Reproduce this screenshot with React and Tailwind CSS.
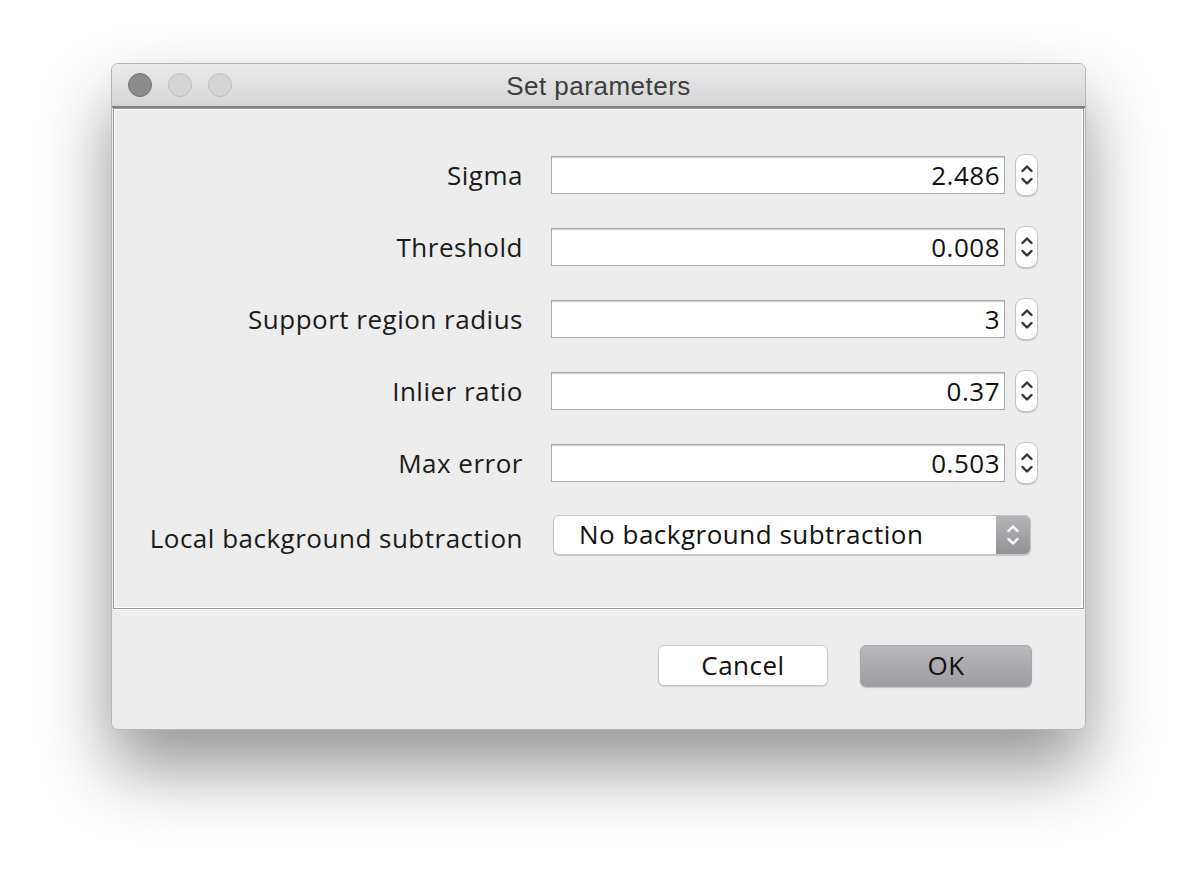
import React from 'react';

const labelFont = { fontFamily: '"Open Sans", "DejaVu Sans", sans-serif', letterSpacing: '0.5px' };

const fields = [
  { label: 'Sigma', value: '2.486' },
  { label: 'Threshold', value: '0.008' },
  { label: 'Support region radius', value: '3' },
  { label: 'Inlier ratio', value: '0.37' },
  { label: 'Max error', value: '0.503' },
];

const Chevrons = ({ color, className }) => (
  <svg viewBox="0 0 14 28" className={className} fill="none" stroke={color} strokeWidth="2.4" strokeLinecap="round" strokeLinejoin="round">
    <path d="M2.5 10 L7 5.5 L11.5 10" />
    <path d="M2.5 18 L7 22.5 L11.5 18" />
  </svg>
);

const Stepper = () => (
  <div className="ml-[10px] flex h-[42px] w-[23px] items-center justify-center rounded-[9px] border border-[#c4c4c4] bg-white shadow-[0_1px_1px_rgba(0,0,0,0.18)]">
    <Chevrons color="#333" className="h-[30px] w-[14px]" />
  </div>
);

const FieldRow = ({ label, value }) => (
  <div className="flex h-[38px] items-center">
    <div className="w-[437px] pr-[28px] text-right text-[26px] text-[#1a1a1a]">{label}</div>
    <div className="flex h-[38px] w-[454px] items-center justify-end border border-[#a9a9a9] bg-white pr-[4px] text-[26px] text-[#111] shadow-[inset_0_1px_0_#d0d0d0]">
      {value}
    </div>
    <Stepper />
  </div>
);

export default function App() {
  return (
    <div className="h-[890px] w-[1198px] bg-white pl-[111px] pt-[63px]" style={labelFont}>
      <div className="flex h-[667px] w-[975px] flex-col overflow-hidden rounded-[7px] border border-[#b5b5b5] bg-[#ededed] shadow-[0_38px_70px_rgba(0,0,0,0.42)]">
        {/* title bar */}
        <div className="relative flex h-[44px] shrink-0 items-center border-b-2 border-[#7e7e7e] bg-gradient-to-b from-[#ebebeb] to-[#d5d5d5]">
          <div className="flex gap-[16px] pl-[16px]">
            <div className="h-[24px] w-[24px] rounded-full border border-[#727272] bg-[#8c8c8c]" />
            <div className="h-[24px] w-[24px] rounded-full border border-[#bdbdbd] bg-[#d4d4d4]" />
            <div className="h-[24px] w-[24px] rounded-full border border-[#bdbdbd] bg-[#d4d4d4]" />
          </div>
          <div
            className="absolute inset-0 flex items-center justify-center pt-[3px] text-[26px] text-[#3d3d3d]"
            style={{ fontFamily: '"Liberation Sans", Arial, sans-serif', letterSpacing: '0.5px' }}
          >
            Set parameters
          </div>
        </div>

        {/* content panel */}
        <div className="mx-[1px] flex h-[501px] shrink-0 flex-col gap-[34px] border border-[#9a9a9a] pt-[47px] shadow-[inset_1px_1px_0_#fff,inset_-1px_-1px_0_#fff]">
          {fields.map((f) => (
            <FieldRow key={f.label} label={f.label} value={f.value} />
          ))}
          <div className="-mt-[1px] flex h-[40px] items-center">
            <div className="w-[437px] pr-[28px] pt-[6px] text-right text-[26px] text-[#1a1a1a]">Local background subtraction</div>
            <div className="ml-[2px] flex h-[40px] w-[478px] overflow-hidden rounded-[6px] border border-[#c3c3c3] bg-white shadow-[0_1px_1px_rgba(0,0,0,0.15)]">
              <div className="flex flex-1 items-center pb-[2px] pl-[25px] text-[26px] text-[#111]">No background subtraction</div>
              <div className="flex w-[34px] items-center justify-center bg-gradient-to-b from-[#b4b4b9] to-[#929297]">
                <Chevrons color="#fff" className="h-[30px] w-[14px]" />
              </div>
            </div>
          </div>
        </div>

        {/* footer */}
        <div className="flex flex-1 items-center justify-end gap-[32px] border-t border-white pb-[8px] pr-[53px]">
          <button className="h-[41px] w-[170px] rounded-[6px] border border-[#c8c8c8] bg-white text-[26px] text-[#111] shadow-[0_1px_1px_rgba(0,0,0,0.12)]">
            Cancel
          </button>
          <button className="h-[42px] w-[172px] rounded-[6px] border border-[#a6a6a8] bg-gradient-to-b from-[#b9b9bd] to-[#9c9ca1] text-[26px] text-[#111] shadow-[0_1px_1px_rgba(0,0,0,0.2)]">
            OK
          </button>
        </div>
      </div>
    </div>
  );
}
